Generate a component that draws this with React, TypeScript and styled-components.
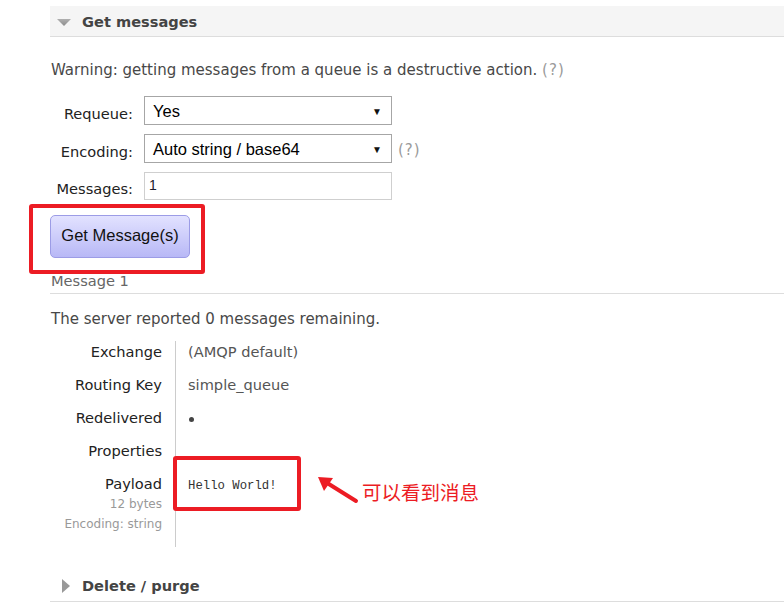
import React from "react";
import styled, { createGlobalStyle } from "styled-components";

const GlobalStyle = createGlobalStyle`
  html, body { margin: 0; padding: 0; background: #fff; }
  body {
    font-family: "DejaVu Sans", Verdana, sans-serif;
    font-size: 14.6px;
    color: #484848;
  }
`;

const Page = styled.div`
  padding: 6px 0 0 50px;
  width: 734px;
`;

const SectionHeader = styled.div<{ $shaded?: boolean }>`
  box-sizing: border-box;
  display: flex;
  align-items: center;
  gap: 11px;
  height: 31px;
  padding: 1px 0 0 7px;
  background: ${(p) => (p.$shaded ? "#f5f5f5" : "#fff")};
  border-bottom: 1px solid #ddd;
  font-weight: bold;
  font-size: 14.6px;
  color: #444;
`;

const Arrow = styled.svg`
  width: 14px;
  height: 14px;
  flex: none;
`;

const Warning = styled.p`
  margin: 23px 0 0 1px;
  line-height: 20px;
  font-size: 15px;
`;

const Hint = styled.span`
  color: #9a9a9a;
  letter-spacing: 1px;
`;

const Form = styled.div`
  display: flex;
  flex-direction: column;
  gap: 9px;
  margin-top: 16px;
`;

const FormRow = styled.div`
  display: flex;
  align-items: center;
`;

const Label = styled.span`
  width: 83px;
  margin-right: 11px;
  text-align: right;
  color: #222;
  line-height: 20px;
  padding-top: 6px;
`;

const SelectBox = styled.div`
  box-sizing: border-box;
  width: 248px;
  height: 29px;
  border: 1px solid #a6a6a6;
  display: flex;
  align-items: center;
  justify-content: space-between;
  padding: 1px 8px 0 8px;
  font-family: "Liberation Sans", Arial, sans-serif;
  font-size: 16.5px;
  color: #000;
  background: #fff;
`;

const Caret = styled.span`
  font-size: 10px;
  color: #111;
  margin-right: 1px;
`;

const TextInput = styled.div`
  box-sizing: border-box;
  width: 248px;
  height: 28px;
  border: 1px solid #cfcfcf;
  padding: 2px 4px 0;
  font-family: "Liberation Sans", Arial, sans-serif;
  font-size: 14px;
  color: #1a1a2a;
  line-height: 20px;
`;

const RowHint = styled(Hint)`
  margin-left: 6px;
  padding-top: 2px;
  font-size: 15px;
`;

const ButtonWrap = styled.div`
  position: relative;
  margin-top: 15px;
  width: 140px;
`;

const Button = styled.button`
  box-sizing: border-box;
  width: 140px;
  height: 43px;
  border: 1px solid #9c9ce6;
  border-radius: 5px;
  background: linear-gradient(#e2e2ff, #b8b8f6);
  font-family: "Liberation Sans", Arial, sans-serif;
  font-size: 16.5px;
  color: #111;
  padding: 0 0 3px;
`;

const RedFrame = styled.div<{ $l: number; $t: number; $w: number; $h: number }>`
  position: absolute;
  left: ${(p) => p.$l}px;
  top: ${(p) => p.$t}px;
  width: ${(p) => p.$w}px;
  height: ${(p) => p.$h}px;
  box-sizing: border-box;
  border: 4px solid #ec1c24;
  border-radius: 3px;
  pointer-events: none;
`;

const MessageTitle = styled.div`
  margin-top: 14px;
  padding: 0 0 3px 1px;
  line-height: 18px;
  color: #666;
  border-bottom: 1px solid #ddd;
`;

const ServerNote = styled.p`
  margin: 15px 0 0 1px;
  line-height: 20px;
  font-size: 15px;
`;

const Props = styled.div`
  display: grid;
  grid-template-columns: 125px 1fr;
  margin-top: 12px;
`;

const PropLabel = styled.div<{ $first?: boolean }>`
  text-align: right;
  padding: ${(p) => (p.$first ? "1px" : "0")} 13px 13px 0;
  line-height: 20px;
  color: #222;
`;

const PropValue = styled.div<{ $first?: boolean }>`
  position: relative;
  border-left: 1px solid #ccc;
  padding: ${(p) => (p.$first ? "1px" : "0")} 0 13px 12px;
  line-height: 20px;
  color: #555;
`;

const SubNote = styled.div`
  font-size: 12px;
  color: #999;
  line-height: 20px;
`;

const Dot = styled.span`
  display: inline-block;
  width: 5px;
  height: 5px;
  border-radius: 50%;
  background: #444;
  vertical-align: middle;
  margin-left: 1px;
`;

const Mono = styled.span`
  font-family: "Liberation Mono", "Courier New", monospace;
  font-size: 12.3px;
  color: #333;
`;

const Pointer = styled.svg`
  position: absolute;
  left: 140px;
  top: 0px;
  width: 44px;
  height: 32px;
`;

const Note = styled.span`
  position: absolute;
  left: 186px;
  top: 6px;
  white-space: nowrap;
  font-family: "Noto Sans CJK SC", sans-serif;
  font-size: 19.5px;
  line-height: 24px;
  color: #ec1c24;
`;

const SecondHeader = styled(SectionHeader)`
  margin-top: 23px;
  height: 32px;
  padding-top: 0;
`;

const DownTriangle = () => (
  <Arrow viewBox="0 0 14 14">
    <defs>
      <linearGradient id="tg" x1="0" y1="0" x2="0" y2="1">
        <stop offset="0" stopColor="#b0b0b0" />
        <stop offset="1" stopColor="#8c8c8c" />
      </linearGradient>
    </defs>
    <polygon points="0,4 14,4 7,11" fill="url(#tg)" />
  </Arrow>
);

const RightTriangle = () => (
  <Arrow viewBox="0 0 14 14">
    <polygon points="5,0 13,7 5,14" fill="#999" />
  </Arrow>
);

export default function App() {
  return (
    <>
      <GlobalStyle />
      <Page>
        <SectionHeader $shaded>
          <DownTriangle />
          <span>Get messages</span>
        </SectionHeader>

        <Warning>
          Warning: getting messages from a queue is a destructive action. <Hint>(?)</Hint>
        </Warning>

        <Form>
          <FormRow>
            <Label>Requeue:</Label>
            <SelectBox>
              <span>Yes</span>
              <Caret>▼</Caret>
            </SelectBox>
          </FormRow>
          <FormRow>
            <Label>Encoding:</Label>
            <SelectBox>
              <span>Auto string / base64</span>
              <Caret>▼</Caret>
            </SelectBox>
            <RowHint>(?)</RowHint>
          </FormRow>
          <FormRow>
            <Label>Messages:</Label>
            <TextInput>1</TextInput>
          </FormRow>
        </Form>

        <ButtonWrap>
          <Button>Get Message(s)</Button>
          <RedFrame $l={-21} $t={-11} $w={176} $h={70} />
        </ButtonWrap>

        <MessageTitle>Message 1</MessageTitle>

        <ServerNote>The server reported 0 messages remaining.</ServerNote>

        <Props>
          <PropLabel $first>Exchange</PropLabel>
          <PropValue $first>(AMQP default)</PropValue>
          <PropLabel>Routing Key</PropLabel>
          <PropValue>simple_queue</PropValue>
          <PropLabel>Redelivered</PropLabel>
          <PropValue>
            <Dot />
          </PropValue>
          <PropLabel>Properties</PropLabel>
          <PropValue />
          <PropLabel>
            Payload
            <SubNote>12 bytes</SubNote>
            <SubNote>Encoding: string</SubNote>
          </PropLabel>
          <PropValue>
            <Mono>Hello World!</Mono>
            <RedFrame $l={-3} $t={-18} $w={128} $h={55} />
            <Pointer viewBox="0 0 44 32">
              <line x1="40" y1="27" x2="8" y2="7" stroke="#ec1c24" strokeWidth="4" strokeLinecap="round" />
              <polygon points="2,3 17,4 8,17" fill="#ec1c24" />
            </Pointer>
            <Note>可以看到消息</Note>
          </PropValue>
        </Props>

        <SecondHeader>
          <RightTriangle />
          <span>Delete / purge</span>
        </SecondHeader>
      </Page>
    </>
  );
}
